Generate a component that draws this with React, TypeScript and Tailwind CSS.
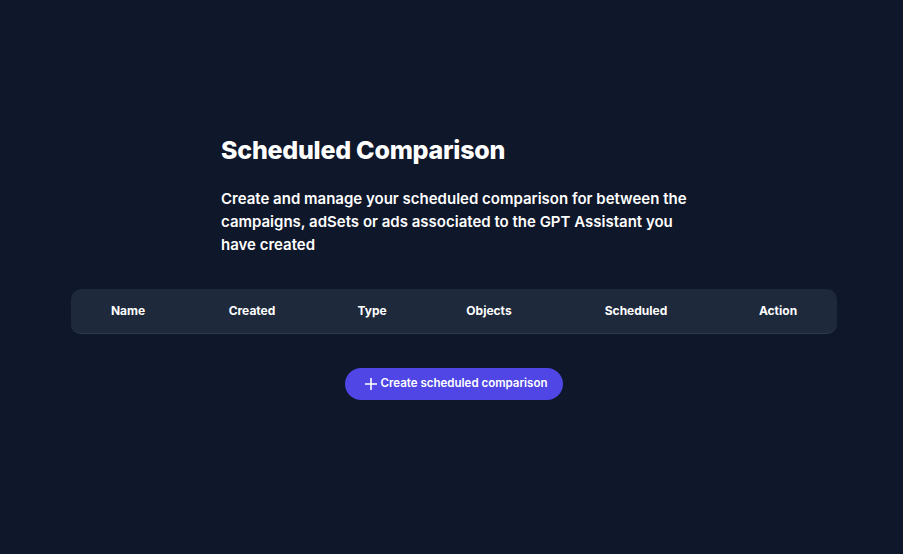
const columns = [
  { label: "Name", width: "114px" },
  { label: "Created", width: "134px" },
  { label: "Type", width: "106px" },
  { label: "Objects", width: "128px" },
  { label: "Scheduled", width: "166px" },
  { label: "Action", width: "118px" },
];

function PlusIcon() {
  return (
    <svg width="12" height="12" viewBox="0 0 12 12" fill="none">
      <path d="M6 0.5v11M0.5 6h11" stroke="white" strokeWidth="1.6" strokeLinecap="round" />
    </svg>
  );
}

export default function App() {
  return (
    <div
      className="min-h-screen w-full bg-[#0f172a] text-white"
      style={{ fontFamily: "Inter, 'Noto Sans', sans-serif" }}
    >
      <div className="pl-[71px] pr-[66px] pt-[134px]">
        <div className="pl-[150px]">
          <h1 className="text-[25px] font-extrabold leading-[32px] tracking-[-0.01em]">
            Scheduled Comparison
          </h1>
          <p className="mt-[21px] max-w-[480px] text-[15px] font-semibold leading-[23px]">
            Create and manage your scheduled comparison for between the campaigns, adSets or ads
            associated to the GPT Assistant you have created
          </p>
        </div>

        <div className="mt-[33px] grid h-[45px] grid-cols-[114px_134px_106px_128px_166px_118px] items-center rounded-[10px] border-b border-[#2c3a4f] bg-[#1e293b]">
          {columns.map((c) => (
            <div key={c.label} className="text-center text-[12px] font-bold">
              {c.label}
            </div>
          ))}
        </div>

        <div className="mt-[34px] flex justify-center">
          <button className="flex h-[32px] items-center gap-[4px] rounded-full bg-[#4f46e5] pl-[20px] pr-[16px] text-[11.5px] font-semibold text-white">
            <PlusIcon />
            Create scheduled comparison
          </button>
        </div>
      </div>
    </div>
  );
}
